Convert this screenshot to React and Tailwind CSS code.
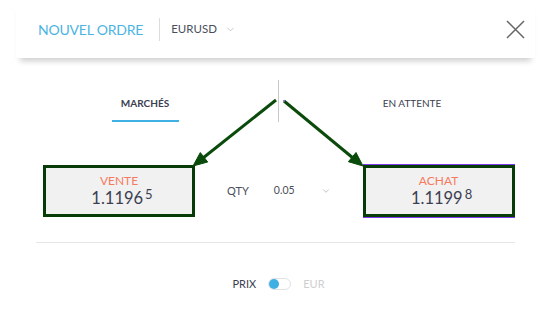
import { ChevronDown } from "lucide-react";

function PriceBox({ label, price, pip, accent }) {
  return (
    <div
      className={`flex h-[52px] w-[152px] flex-col items-center justify-center border-[3px] border-[#073b07] bg-[#f1f1f1] ${
        accent ? "shadow-[0_-1px_0_#7c3aed,0_1px_0_#7c3aed]" : ""
      }`}
    >
      <p className="text-[12px] leading-[14px] text-[#f57a5f]">{label}</p>
      <p className="pl-[6px] text-[16.5px] leading-[20px] text-[#3b4050]">
        {price}
        <span className="relative -top-[5px] ml-[2px] text-[13px] leading-none">{pip}</span>
      </p>
    </div>
  );
}

export default function App() {
  return (
    <div className="relative h-[336px] w-[551px] overflow-hidden bg-white font-['Lato',sans-serif]">
      <header className="mx-[16px] flex h-[58px] items-center pl-[22px] pr-[10px] shadow-[0_7px_6px_-4px_rgba(0,0,0,0.2)]">
        <h1 className="text-[14px] tracking-[-0.2px] text-[#4bb4e2]">NOUVEL ORDRE</h1>
        <div className="ml-[16px] h-[23px] w-px bg-[#dddddd]" />
        <button className="ml-[11px] flex items-center gap-[8px] text-[11.5px] text-[#4a4f5c]">
          EURUSD
          <ChevronDown size={11} strokeWidth={1.2} className="text-[#9a9ea8]" />
        </button>
        <button className="ml-auto text-[#666]">
          <svg width="19" height="19" viewBox="0 0 19 19" fill="none" stroke="currentColor" strokeWidth="1.5">
            <path d="M1 1 L18 18 M18 1 L1 18" />
          </svg>
        </button>
      </header>

      <div className="mt-[22px] flex h-[42px]">
        <div className="flex w-[278px] justify-center pl-[12px]">
          <div className="flex w-[67px] flex-col items-center border-b-2 border-[#3fb0e3] pb-[7px] pt-[17px]">
            <span className="text-[10px] font-bold leading-[12px] text-[#3b4050]">MARCHÉS</span>
          </div>
        </div>
        <div className="w-px bg-[#c8c8c8]" />
        <div className="flex flex-1 justify-center pr-[6px] pt-[17px]">
          <span className="text-[10px] leading-[12px] text-[#3b4050]">EN ATTENTE</span>
        </div>
      </div>

      <div className="mt-[43px] flex items-center pl-[43px]">
        <PriceBox label="VENTE" price="1.1196" pip="5" />
        <span className="ml-[32px] text-[11px] text-[#4a4f5c]">QTY</span>
        <span className="ml-[25px] text-[10.5px] text-[#4a4f5c]">0.05</span>
        <ChevronDown size={10} strokeWidth={1.3} className="ml-[26px] text-[#8a8e98]" />
        <div className="ml-[32px]">
          <PriceBox label="ACHAT" price="1.1199" pip="8" accent />
        </div>
      </div>

      <div className="mx-[36px] mt-[25px] h-px bg-[#e6e6e6]" />

      <div className="mt-[33px] flex items-center justify-center gap-[12px] pl-[6px]">
        <span className="text-[11px] text-[#3b4050]">PRIX</span>
        <div className="flex h-[12px] w-[23px] items-center rounded-full border border-[#e2e2e2] bg-white">
          <div className="h-[10px] w-[10px] rounded-full bg-[#3fb0e3]" />
        </div>
        <span className="text-[11px] text-[#cfcfcf]">EUR</span>
      </div>

      <svg className="pointer-events-none absolute left-0 top-0" width="551" height="336">
        <g stroke="#0a4a0a" strokeWidth="3" fill="#0a4a0a">
          <line x1="276" y1="100" x2="203" y2="158" />
          <polygon points="193,166 207.7,162 200.3,152.6" strokeWidth="1" />
          <line x1="284" y1="101" x2="353" y2="158" />
          <polygon points="363,166 348.4,161.7 356,152.5" strokeWidth="1" />
        </g>
        <circle cx="284" cy="101" r="1" fill="#8b5cf6" />
      </svg>
    </div>
  );
}
